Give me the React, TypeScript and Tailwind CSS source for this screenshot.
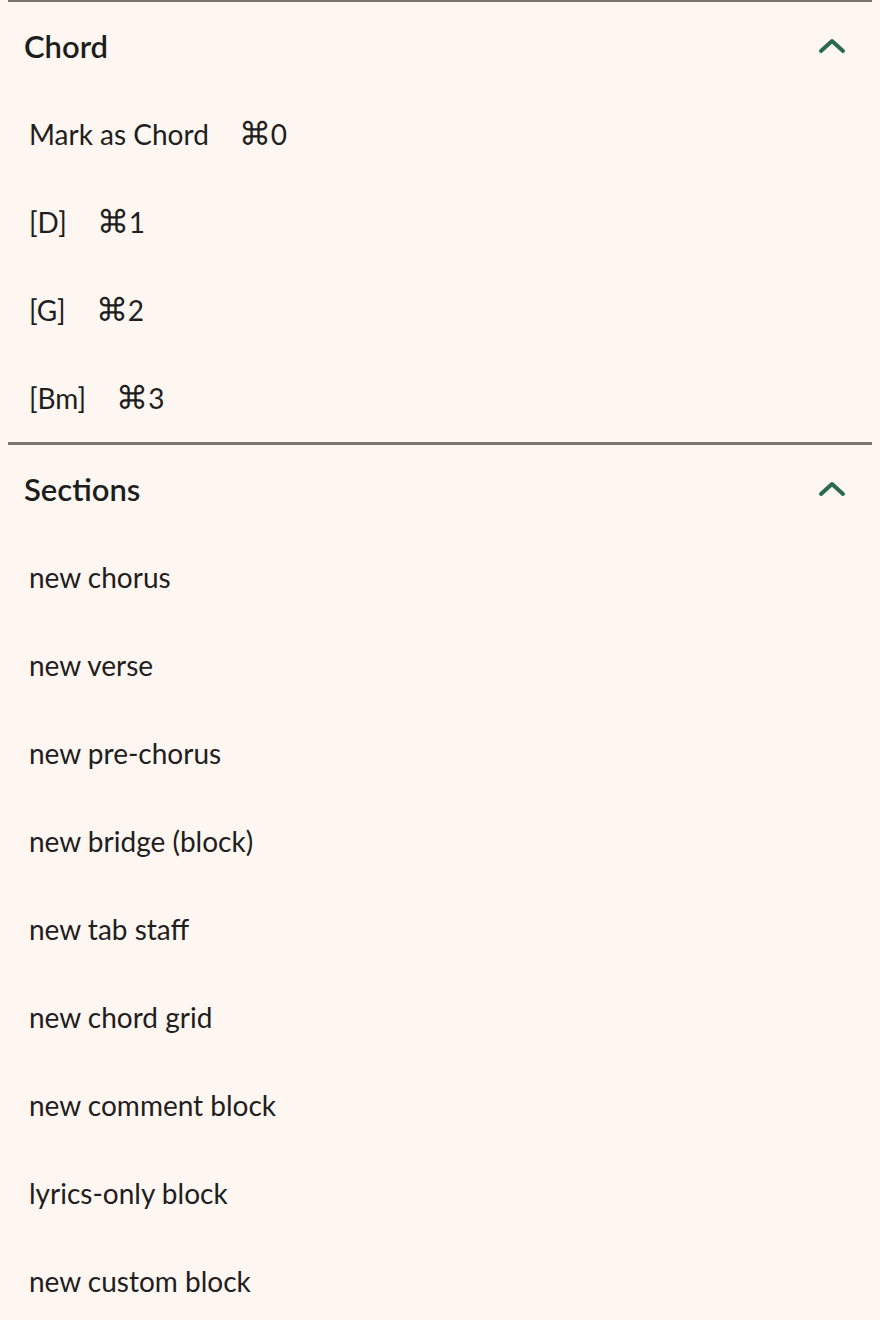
import React from "react"

type Item = { label: string; shortcut?: string }

const chordItems: Item[] = [
    { label: "Mark as Chord", shortcut: "0" },
    { label: "[D]", shortcut: "1" },
    { label: "[G]", shortcut: "2" },
    { label: "[Bm]", shortcut: "3" },
]

const sectionItems: Item[] = [
    { label: "new chorus" },
    { label: "new verse" },
    { label: "new pre-chorus" },
    { label: "new bridge (block)" },
    { label: "new tab staff" },
    { label: "new chord grid" },
    { label: "new comment block" },
    { label: "lyrics-only block" },
    { label: "new custom block" },
]

function ChevronUp() {
    return (
        <svg width="28" height="18" viewBox="0 0 28 18" fill="none" aria-hidden="true">
            <polyline points="3,14 14,4 25,14" stroke="#2b6b4b" strokeWidth="4" strokeLinecap="round" strokeLinejoin="round" />
        </svg>
    )
}

function Group({ title, items }: { title: string; items: Item[] }) {
    return (
        <section className="border-t-[3px] border-[#7c766f]">
            <button type="button" className="flex h-[88px] w-full items-center justify-between pl-4 pr-[26px] text-left">
                <span className="text-[31px] font-semibold text-[#1c1e1c]">{title}</span>
                <ChevronUp />
            </button>
            <ul>
                {items.map((item) => (
                    <li key={item.label} className="flex h-[88px] items-center gap-[30px] pl-[21px] text-[28px] text-[#1e201e]">
                        <span>{item.label}</span>
                        {item.shortcut && (
                            <span className="flex items-center">
                                {/* command key glyph from DejaVu, Lato has none */}
                                <span className="font-['DejaVu_Sans'] text-[32px] font-light leading-none">⌘</span>
                                <span>{item.shortcut}</span>
                            </span>
                        )}
                    </li>
                ))}
            </ul>
        </section>
    )
}

export default function App() {
    return (
        <div className="min-h-[1320px] bg-[#fef7f1] px-2" style={{ fontFamily: "Lato, 'Noto Sans', sans-serif" }}>
            <div className="-mt-px">
                <Group title="Chord" items={chordItems} />
                <Group title="Sections" items={sectionItems} />
            </div>
        </div>
    )
}
